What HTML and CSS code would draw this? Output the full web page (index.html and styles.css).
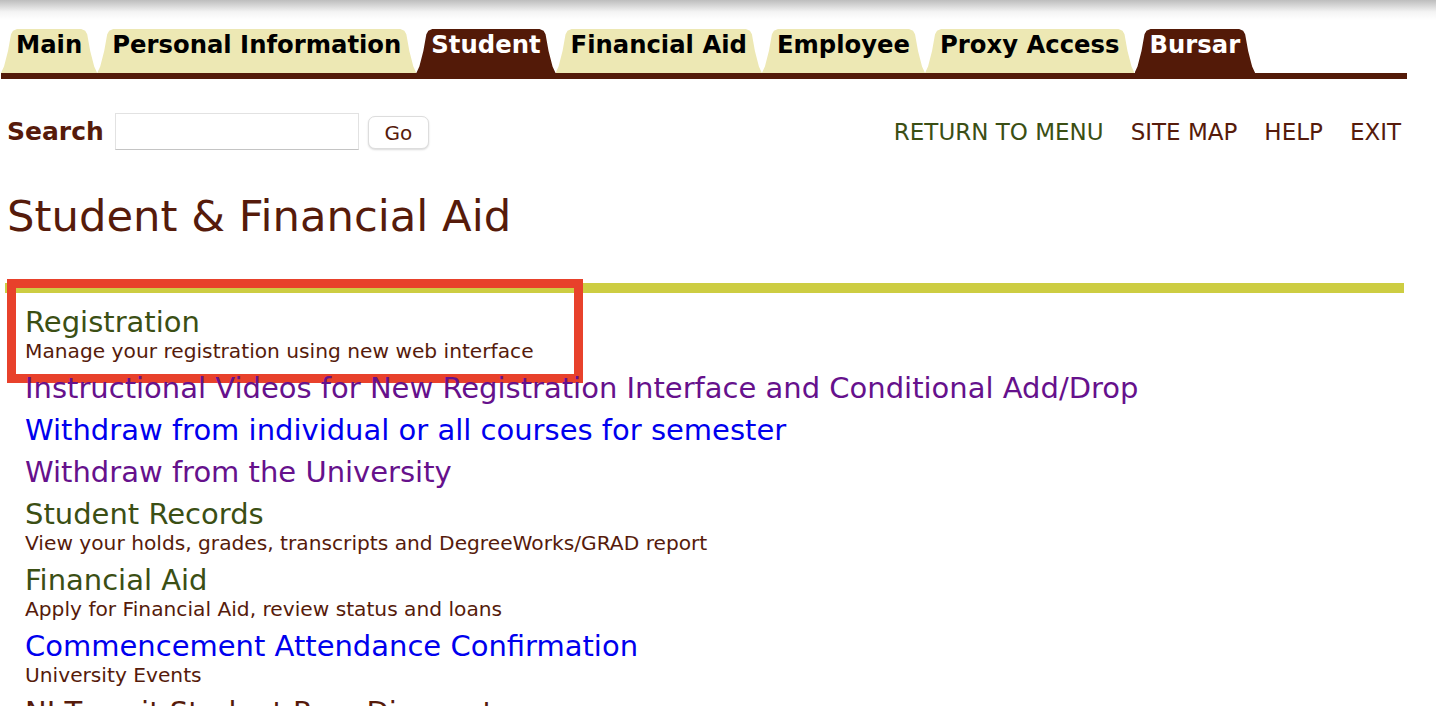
FILE: index.html
```html
<!DOCTYPE html>
<html lang="en">
<head>
    <meta charset="UTF-8">
    <title>Student &amp; Financial Aid</title>
    <link rel="stylesheet" href="styles.css">
</head>
<body>

    <div class="page">
        <!-- abas do menu -->
        <div class="tabs">
            <a class="tab" href="#">Main</a>
            <a class="tab" href="#">Personal Information</a>
            <a class="tab active" href="#">Student</a>
            <a class="tab" href="#">Financial Aid</a>
            <a class="tab" href="#">Employee</a>
            <a class="tab" href="#">Proxy Access</a>
            <a class="tab active" href="#">Bursar</a>
        </div>

        <div class="toolbar">
            <form class="search">
                <label for="q">Search</label>
                <input type="text" id="q" name="q">
                <button type="button">Go</button>
            </form>
            <div class="toplinks">
                <a class="green" href="#">RETURN TO MENU</a>
                <a href="#">SITE MAP</a>
                <a href="#">HELP</a>
                <a href="#">EXIT</a>
            </div>
        </div>

        <h1>Student &amp; Financial Aid</h1>

        <div class="menu">
            <div class="item highlight">
                <a class="green" href="#">Registration</a>
                <span class="desc">Manage your registration using new web interface</span>
            </div>
            <div class="item">
                <a class="visited" href="#">Instructional Videos for New Registration Interface and Conditional Add/Drop</a>
            </div>
            <div class="item">
                <a class="blue" href="#">Withdraw from individual or all courses for semester</a>
            </div>
            <div class="item">
                <a class="visited" href="#">Withdraw from the University</a>
            </div>
            <div class="item">
                <a class="green" href="#">Student Records</a>
                <span class="desc">View your holds, grades, transcripts and DegreeWorks/GRAD report</span>
            </div>
            <div class="item">
                <a class="green" href="#">Financial Aid</a>
                <span class="desc">Apply for Financial Aid, review status and loans</span>
            </div>
            <div class="item">
                <a class="blue" href="#">Commencement Attendance Confirmation</a>
                <span class="desc">University Events</span>
            </div>
            <div class="item">
                <a class="brown" href="#">NJ Transit Student Pass Discount</a>
            </div>
        </div>
    </div>

</body>
</html>
```

FILE: styles.css
```css
body { margin: 0; font-family: "DejaVu Sans", Verdana, sans-serif; color: #561b0b; background: linear-gradient(#bdbdbd, #f4f4f4 12px, #fff 20px) no-repeat; overflow: hidden; }
a { text-decoration: none; }
.page { width: 1406px; padding: 29px 0 0 1px; }

/* abas */
.tabs { display: flex; border-bottom: 6px solid #531a08; height: 44px; width: 1406px; }
.tab { display: block; padding: 2px 15px 0; height: 42px; line-height: 28px; font-size: 24.3px; font-weight: bold; color: #000; background: #ede8b4; clip-path: polygon(0 100%, 3px 85%, 7px 50%, 10px 12%, 12px 4%, 16px 0, calc(100% - 16px) 0, calc(100% - 12px) 4%, calc(100% - 10px) 12%, calc(100% - 7px) 50%, calc(100% - 3px) 85%, 100% 100%); }
.tab.active { background: #531a08; color: #fff; }

.toolbar { display: flex; justify-content: space-between; align-items: center; margin-top: 34px; padding: 0 6px; }
.search { display: flex; align-items: center; }
.search label { font-size: 25px; font-weight: bold; margin-right: 11px; }
.search input { width: 244px; height: 37px; box-sizing: border-box; border: 1px solid #e2e2e2; border-bottom-color: #c4c4c4; margin-right: 9px; }
.search button { width: 61px; height: 33px; margin-top: 2px; font-family: "DejaVu Sans", sans-serif; font-size: 20px; color: #561b0b; background: #fff; border: 1px solid #ddd; border-radius: 7px; box-shadow: 0 1px 2px rgba(0, 0, 0, 0.15); }
.toplinks { display: flex; gap: 27px; }
.toplinks a { font-size: 23px; color: #561b0b; }

h1 { font-size: 43.3px; font-weight: normal; margin: 40px 0 0 6px; line-height: 52px; }

.menu { position: relative; margin-top: 41px; border-top: 10px solid #cdcd42; margin-left: 4px; margin-right: 3px; padding: 12px 0 0 20px; display: flex; flex-direction: column; gap: 8px; }
.item { display: flex; flex-direction: column; position: relative; }
.item a { font-size: 29px; line-height: 34px; }
.desc { font-size: 20.2px; line-height: 24px; }
.green { color: #3b4f14 !important; }
.blue { color: #0000ee; }
.visited { color: #66118c; }
.brown { color: #561b0b; }

/* caixa vermelha em volta do item */
.highlight::after { content: ''; position: absolute; left: -18px; top: -26px; width: 576px; height: 104px; box-sizing: border-box; border: 9px solid #e8412b; }
```
